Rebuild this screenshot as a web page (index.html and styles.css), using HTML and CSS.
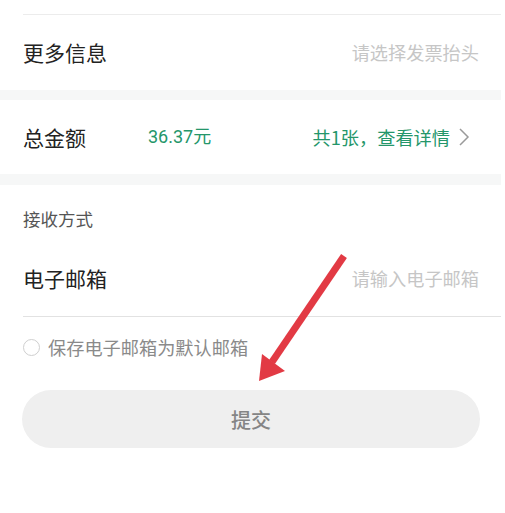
FILE: index.html
```html
<!DOCTYPE html>
<html lang="zh-CN">
<head>
<meta charset="utf-8">
<link rel="stylesheet" href="styles.css">
</head>
<body>
<div class="page">
  <div class="top-gap"></div>
  <div class="row row-more">
    <span class="label">更多信息</span>
    <span class="placeholder">请选择发票抬头</span>
  </div>
  <div class="band"></div>
  <div class="row row-total">
    <span class="label">总金额</span>
    <span class="amount">36.37元</span>
    <span class="detail">共1张，查看详情
      <svg class="chev" width="12" height="20" viewBox="0 0 12 20"><path d="M2 2 L10 10 L2 18" fill="none" stroke="#9a9a9a" stroke-width="1.5"/></svg>
    </span>
  </div>
  <div class="band band2"></div>
  <div class="section-title">接收方式</div>
  <div class="row row-email">
    <span class="label">电子邮箱</span>
    <span class="placeholder">请输入电子邮箱</span>
  </div>
  <label class="save">
    <span class="radio"></span>
    <span class="save-text">保存电子邮箱为默认邮箱</span>
  </label>
  <div class="btn-wrap">
    <div class="btn">提交</div>
  </div>
  <svg class="arrow" width="505" height="513" viewBox="0 0 505 513">
    <line x1="344" y1="256" x2="272" y2="362" stroke="#e23a44" stroke-width="7"/>
    <polygon points="259,381 262,354 285,371" fill="#e23a44"/>
  </svg>
</div>
</body>
</html>
```

FILE: styles.css
```css
html, body {
  margin: 0;
  padding: 0;
  background: #ffffff;
}
.page {
  position: relative;
  width: 501px;
  height: 513px;
  font-family: "Noto Sans CJK SC", "Noto Sans", sans-serif;
  color: #222;
}
.top-gap {
  height: 14px;
  margin-left: 23px;
  border-bottom: 1px solid #ececec;
}
.row {
  display: flex;
  align-items: center;
  padding: 0 22px 0 23px;
}
.row-more {
  height: 75px;
}
.row-total {
  height: 74px;
}
.row-email {
  height: 76px;
  margin-top: 10px;
  margin-left: 23px;
  padding-left: 0;
  border-bottom: 1px solid #e2e2e2;
}
.label {
  font-size: 21px;
  line-height: 1;
  color: #222;
}
.placeholder {
  margin-left: auto;
  font-size: 18.2px;
  line-height: 1;
  color: #c6c6c6;
}
.band {
  height: 10px;
  background: #f6f7f7;
}
.band2 {
  height: 11px;
}
.amount {
  margin-left: 62px;
  font-size: 18px;
  line-height: 1;
  color: #24966a;
  font-family: "Roboto", "Noto Sans CJK SC", sans-serif;
}
.detail {
  margin-left: auto;
  display: flex;
  align-items: center;
  gap: 8px;
  font-size: 18.2px;
  line-height: 1;
  color: #24966a;
  margin-right: 9px;
}
.chev {
  display: block;
}
.section-title {
  padding: 23px 0 0 23px;
  height: 22px;
  font-size: 17.5px;
  line-height: 22px;
  color: #555;
}
.save {
  display: flex;
  align-items: center;
  gap: 8px;
  padding-left: 23px;
  height: 60px;
}
.radio {
  width: 15px;
  height: 15px;
  border: 1.5px solid #cfcfcf;
  border-radius: 50%;
}
.save-text {
  font-size: 18.2px;
  line-height: 1;
  color: #8a8a8a;
}
.btn-wrap {
  padding: 13px 21px 0 22px;
}
.btn {
  height: 58px;
  border-radius: 29px;
  background: #efefef;
  display: flex;
  align-items: center;
  justify-content: center;
  font-size: 20px;
  font-weight: 500;
  color: #858585;
}
.arrow {
  position: absolute;
  left: 0;
  top: 0;
  pointer-events: none;
}
```
